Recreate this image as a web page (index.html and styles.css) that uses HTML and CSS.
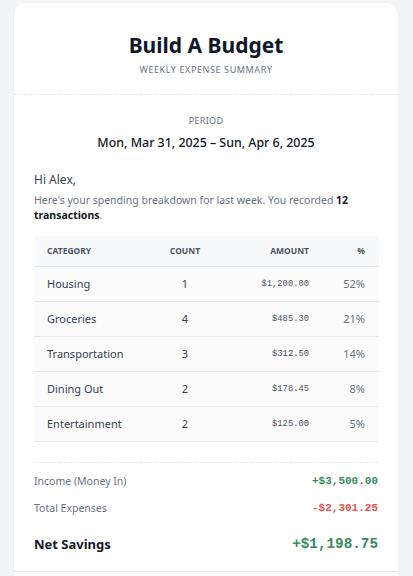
FILE: index.html
```html
<!DOCTYPE html>
<html>

<head>
    <title>Build A Budget - Weekly Summary</title>
    <link rel="stylesheet" href="styles.css">
</head>

<body>
    <div class="card">
        <div class="header">
            <h1 class="title">Build A Budget</h1>
            <div class="subtitle">Weekly Expense Summary</div>
        </div>

        <div class="content">
            <div class="period">
                <div class="period-label">Period</div>
                <div class="period-dates">Mon, Mar 31, 2025 – Sun, Apr 6, 2025</div>
            </div>

            <p class="greeting">Hi Alex,</p>
            <p class="intro">Here's your spending breakdown for last week. You recorded <strong>12</strong> <strong>transactions</strong>.</p>

            <table class="breakdown">
                <thead>
                    <tr>
                        <th class="col-cat">Category</th>
                        <th class="col-count">Count</th>
                        <th class="col-amount">Amount</th>
                        <th class="col-pct">%</th>
                    </tr>
                </thead>
                <tbody>
                    <tr>
                        <td class="col-cat">Housing</td>
                        <td class="col-count">1</td>
                        <td class="col-amount">$1,200.00</td>
                        <td class="col-pct">52%</td>
                    </tr>
                    <tr>
                        <td class="col-cat">Groceries</td>
                        <td class="col-count">4</td>
                        <td class="col-amount">$485.30</td>
                        <td class="col-pct">21%</td>
                    </tr>
                    <tr>
                        <td class="col-cat">Transportation</td>
                        <td class="col-count">3</td>
                        <td class="col-amount">$312.50</td>
                        <td class="col-pct">14%</td>
                    </tr>
                    <tr>
                        <td class="col-cat">Dining Out</td>
                        <td class="col-count">2</td>
                        <td class="col-amount">$178.45</td>
                        <td class="col-pct">8%</td>
                    </tr>
                    <tr>
                        <td class="col-cat">Entertainment</td>
                        <td class="col-count">2</td>
                        <td class="col-amount">$125.00</td>
                        <td class="col-pct">5%</td>
                    </tr>
                </tbody>
            </table>

            <div class="totals">
                <div class="total-row">
                    <span class="total-label">Income (Money In)</span>
                    <span class="money positive">+$3,500.00</span>
                </div>
                <div class="total-row">
                    <span class="total-label">Total Expenses</span>
                    <span class="money negative">-$2,301.25</span>
                </div>
                <div class="total-row net">
                    <span class="net-label">Net Savings</span>
                    <span class="money net-value">+$1,198.75</span>
                </div>
            </div>
        </div>

        <div class="footer"></div>
    </div>
</body>

</html>
```

FILE: styles.css
```css
body {
    margin: 0;
    padding: 3px 15px 0 14px;
    background: #f3f4f6;
    font-family: "Noto Sans", "Open Sans", sans-serif;
    color: #111827;
}

.card {
    background: #fff;
    border-radius: 12px 12px 0 0;
    box-shadow: 0 1px 3px rgba(0, 0, 0, 0.05);
    height: 590px;
}

.header {
    padding: 28px 20px 17px;
    text-align: center;
    border-bottom: 1px dashed #e5e7eb;
}

.title {
    margin: 0;
    font-size: 21px;
    line-height: 28px;
    font-weight: 700;
    color: #0f172a;
}

.subtitle {
    margin-top: 4px;
    font-size: 9px;
    line-height: 14px;
    letter-spacing: 0.6px;
    text-transform: uppercase;
    color: #6b7280;
}

.content {
    padding: 20px 20px 17px;
}

.period {
    text-align: center;
}

.period-label {
    font-size: 9px;
    line-height: 12px;
    text-transform: uppercase;
    letter-spacing: 0.3px;
    color: #6b7280;
}

.period-dates {
    margin-top: 7px;
    font-size: 12.4px;
    line-height: 18px;
    font-weight: 500;
    color: #111827;
}

.greeting {
    margin: 20px 0 0;
    font-size: 12px;
    line-height: 16px;
    color: #374151;
}

.intro {
    margin: 5px 0 0;
    font-size: 10.5px;
    line-height: 15px;
    color: #6b7280;
}

.intro strong {
    color: #111827;
    font-weight: 700;
}

.breakdown {
    width: 100%;
    margin-top: 13px;
    border-collapse: collapse;
    table-layout: fixed;
    background: #fbfbfc;
}

.breakdown th,
.breakdown td {
    box-sizing: border-box;
    padding: 0;
}

.breakdown th {
    height: 30px;
    font-size: 8.5px;
    font-weight: 700;
    text-transform: uppercase;
    color: #4b5563;
    background: #f8f9fa;
}

.breakdown td {
    height: 35px;
    font-size: 11px;
    color: #374151;
    border-top: 1px solid #e5e7eb;
}

.breakdown tbody tr:last-child td {
    border-bottom: 1px solid #e5e7eb;
}

.breakdown .col-cat {
    width: 102px;
    text-align: left;
    padding-left: 13px;
}

.breakdown .col-count {
    width: 98px;
    text-align: center;
}

.breakdown .col-amount {
    width: 89px;
    text-align: right;
    padding-right: 14px;
}

.breakdown td.col-amount {
    font-family: "Liberation Mono", "Courier New", monospace;
    font-size: 8.8px;
    color: #4b5563;
}

.breakdown .col-pct {
    width: 56px;
    text-align: right;
    padding-right: 14px;
}

.breakdown td.col-pct {
    color: #6b7280;
}

.totals {
    margin-top: 20px;
    padding-top: 10px;
    border-top: 1px dashed #e5e7eb;
}

.total-row {
    display: flex;
    justify-content: space-between;
    align-items: center;
    line-height: 16px;
}

.total-row + .total-row {
    margin-top: 11px;
}

.total-label {
    font-size: 10.5px;
    color: #6b7280;
}

.money {
    font-family: "Liberation Mono", "Courier New", monospace;
    font-weight: 700;
    font-size: 11px;
}

.positive {
    color: #3b8a5f;
}

.negative {
    color: #e5534b;
}

.total-row.net {
    margin-top: 18px;
    line-height: 20px;
}

.net-label {
    font-size: 13px;
    font-weight: 700;
    color: #0f172a;
}

.net-value {
    font-size: 14.3px;
    color: #3b8a5f;
}

.footer {
    border-top: 1px solid #e5e7eb;
}
```
